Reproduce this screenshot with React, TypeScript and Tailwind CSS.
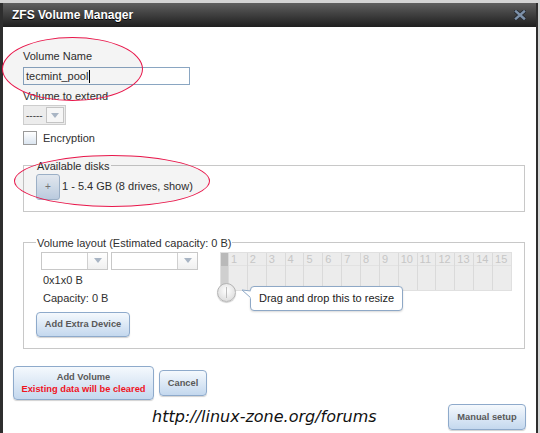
import React from 'react';

// ZFS volume manager dialog (FreeNAS style)

const blueBtn =
  'rounded-[4px] border border-[#8eaacb] bg-gradient-to-b from-[#f5f9fd] to-[#c4d8ee] shadow-[0_1px_1px_rgba(0,0,0,0.18)] font-bold text-[#595959] text-[9.3px] leading-[12px]';

function DropArrow() {
  return (
    <svg width="8" height="5" viewBox="0 0 8 5">
      <path d="M0 0 L8 0 L4 5 Z" fill="#a9b5c4" />
    </svg>
  );
}

function Select({ width }: { width: number }) {
  return (
    <div className="flex h-[18px] border border-[#c8c8c8] bg-white" style={{ width }}>
      <div className="flex-1" />
      <div className="flex w-[20px] items-center justify-center border-l border-[#d0d0d0] bg-gradient-to-b from-white to-[#f0f0f0]">
        <DropArrow />
      </div>
    </div>
  );
}

function DiskGrid() {
  const cols = Array.from({ length: 15 }, (_, i) => i + 1);
  return (
    <div className="relative mt-[2px] h-[39px] w-[292px]">
      <div className="flex h-full border border-[#e0e0e0] bg-[#ececec]">
        <div className="flex w-[7px] flex-col">
          <div className="h-[13px] bg-[#b9b9b9]" />
          <div className="flex-1 bg-[#cfcfcf]" />
        </div>
        {cols.map((n) => (
          <div key={n} className="flex-1 border-l border-[#dadada]">
            <div className="h-[13px] border-b border-[#e2e2e2] pl-[2px] text-[11px] leading-[13px] text-[#c6c6c6]">
              {n}
            </div>
          </div>
        ))}
      </div>

      {/* resize handle */}
      <div className="absolute left-[-3px] top-[31px] h-[19px] w-[19px] rounded-full border border-[#b4b4b4] bg-[radial-gradient(circle_at_50%_40%,#ffffff,#d4d4d4)] shadow-[0_1px_1px_rgba(0,0,0,0.2)]">
        <div className="absolute left-[8px] top-[3px] h-[11px] w-[1px] bg-[#bdbdbd]" />
      </div>

      {/* hint bubble */}
      <div className="absolute left-[30px] top-[34px] flex h-[25px] w-[153px] items-center rounded-[4px] border border-[#8ea8c6] bg-white pl-[8px] text-[11px] text-[#222] shadow-[0_1px_2px_rgba(0,0,0,0.15)]">
        Drag and drop this to resize
      </div>
      <svg className="absolute left-[21px] top-[37px]" width="12" height="12" viewBox="0 0 12 12">
        <path d="M10 2 L1 1 L10 9" fill="white" stroke="#8ea8c6" strokeWidth="1" />
        <path d="M10.5 1.5 L10.5 9.5" stroke="white" strokeWidth="2" />
      </svg>
    </div>
  );
}

export default function App() {
  return (
    <div className="relative h-[433px] w-[540px] overflow-hidden bg-[#d4d4d4] font-['Liberation_Sans',Arial,sans-serif] text-[#2f2f2f]">
      <div className="mt-[3px] flex h-[430px] w-[538px] flex-col border-l-[3px] border-r-2 border-[#2e2e2e] bg-white">
        {/* title bar */}
        <div className="flex h-[24px] shrink-0 items-center justify-between bg-gradient-to-b from-[#606060] to-[#1f1f1f] pl-[9px] pr-[10px]">
          <span className="text-[12px] font-bold text-white [text-shadow:0_1px_0_#000]">ZFS Volume Manager</span>
          <svg width="12" height="10" viewBox="0 0 12 10">
            <path d="M2 1.5 L10 8.5 M10 1.5 L2 8.5" stroke="#262b32" strokeWidth="4.2" strokeLinecap="square" />
            <path d="M2 1.5 L10 8.5 M10 1.5 L2 8.5" stroke="#7d91a9" strokeWidth="2.4" strokeLinecap="square" />
          </svg>
        </div>

        <div className="flex flex-1 flex-col px-[10px] pt-[22px]">
          <div className="pl-[10px] pr-[1px]">
            <div className="text-[11px] leading-[14px]">Volume Name</div>
            <div className="mt-[4px] flex h-[18px] w-[167px] items-center border border-[#8aa6c2] bg-white pl-[2px] text-[11px]">
              tecmint_pool
              <span className="ml-[1px] h-[13px] w-[1px] bg-black" />
            </div>

            <div className="mt-[4px] text-[11px] leading-[14px]">Volume to extend</div>
            <div className="mt-[2px] flex h-[20px] w-[43px] border border-[#cdcdcd] bg-[#ececec]">
              <div className="flex w-[21px] items-center pl-[2px] text-[10px] text-[#444]">-----</div>
              <div className="m-[1px] flex flex-1 items-center justify-center border border-[#c4c4c4] bg-[#f6f6f6]">
                <DropArrow />
              </div>
            </div>

            <div className="mt-[5px] flex items-center gap-[6px]">
              <div className="h-[14px] w-[14px] border border-[#9a9a9a] bg-gradient-to-b from-white to-[#dbe5f0]" />
              <span className="text-[11px]">Encryption</span>
            </div>

            <fieldset className="mt-[12px] border border-[#c8c8c8] px-[12px] pb-[11px]">
              <legend className="px-[1px] text-[11px] leading-[14px]">Available disks</legend>
              <div className="mt-[1px] flex items-center gap-[2px]">
                <button className="flex h-[26px] w-[24px] items-center justify-center rounded-[3px] border border-[#a3b7cf] bg-gradient-to-b from-[#ecf2f9] to-[#c3d4e9] text-[10px] text-[#777]">
                  +
                </button>
                <span className="text-[11px]">1 - 5.4 GB (8 drives, show)</span>
              </div>
            </fieldset>

            <fieldset className="mt-[24px] border border-[#c8c8c8] px-[12px] pb-[11px]">
              <legend className="px-[1px] text-[11px] leading-[14px]">Volume layout (Estimated capacity: 0 B)</legend>
              <div className="flex">
                <div className="flex w-[184px] flex-col">
                  <div className="ml-[5px] mt-[2px] flex gap-[3px]">
                    <Select width={67} />
                    <Select width={87} />
                  </div>
                  <div className="ml-[7px] mt-[3px] text-[11px] leading-[14px]">0x1x0 B</div>
                  <div className="ml-[7px] mt-[4px] text-[11px] leading-[14px]">Capacity: 0 B</div>
                  <button className={`${blueBtn} mt-[7px] h-[25px] w-[94px]`}>Add Extra Device</button>
                </div>
                <DiskGrid />
              </div>
            </fieldset>
          </div>

          <div className="mt-[17px] flex items-center gap-[5px]">
            <button className={`${blueBtn} flex h-[34px] w-[141px] flex-col items-center justify-center`}>
              <span>Add Volume</span>
              <span className="text-[#f0141e]">Existing data will be cleared</span>
            </button>
            <button className={`${blueBtn} h-[26px] w-[48px]`}>Cancel</button>
          </div>

          <div className="mt-[4px] flex items-center">
            <span className="ml-[139px] font-['DejaVu_Sans',sans-serif] text-[16px] italic text-[#111]">
              http://linux-zone.org/forums
            </span>
            <button className={`${blueBtn} ml-auto h-[26px] w-[78px]`}>Manual setup</button>
          </div>
        </div>
      </div>

      {/* red annotation rings */}
      <div className="absolute left-[2px] top-[37px] h-[64px] w-[141px] rounded-[50%] border-[1.5px] border-[#e8164a] bg-black/[0.045]" />
      <div className="absolute left-[14px] top-[155px] h-[52px] w-[196px] rounded-[50%] border-[1.5px] border-[#e8164a] bg-black/[0.045]" />
    </div>
  );
}
